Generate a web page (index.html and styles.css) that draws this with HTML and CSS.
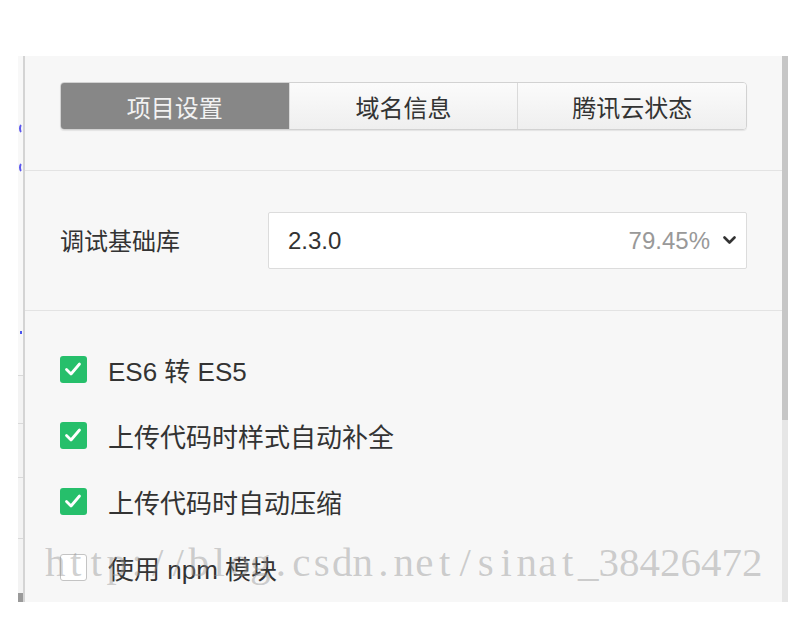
FILE: index.html
```html
<!DOCTYPE html>
<html lang="zh-CN">
<head>
<meta charset="utf-8">
<title>项目设置</title>
<link rel="stylesheet" href="styles.css">
</head>
<body>
<div class="screen">
  <div class="window">
    <div class="sliver">
      <span class="code-mark m1"></span>
      <span class="code-mark m2"></span>
      <span class="code-dot"></span>
      <div class="sl-top"></div>
      <div class="sl-row h48"></div>
      <div class="sl-row h54"></div>
      <div class="sl-row h61"></div>
      <div class="sl-row h55"></div>
      <div class="sl-bottom"></div>
    </div>
    <div class="panel">
      <div class="sec sec-tabs">
        <div class="tabs">
          <div class="tab active">项目设置</div>
          <div class="tab">域名信息</div>
          <div class="tab">腾讯云状态</div>
        </div>
      </div>
      <div class="sec sec-lib">
        <div class="lib-row">
          <div class="lib-label">调试基础库</div>
          <div class="select">
            <span class="sel-value">2.3.0</span>
            <span class="sel-pct">79.45%</span>
            <svg class="chev" width="13" height="9" viewBox="0 0 13 9"><polyline points="1.5,1.5 6.5,6.5 11.5,1.5" fill="none" stroke="#333" stroke-width="2.6" stroke-linecap="round" stroke-linejoin="round"/></svg>
          </div>
        </div>
      </div>
      <div class="sec sec-opts">
        <div class="opt">
          <span class="cb on"><svg width="26" height="26" viewBox="0 0 26 26"><polyline points="6.5,13.5 11,18 19.5,8" fill="none" stroke="#fff" stroke-width="2.8" stroke-linecap="round" stroke-linejoin="round"/></svg></span>
          <span class="opt-text">ES6 转 ES5</span>
        </div>
        <div class="opt">
          <span class="cb on"><svg width="26" height="26" viewBox="0 0 26 26"><polyline points="6.5,13.5 11,18 19.5,8" fill="none" stroke="#fff" stroke-width="2.8" stroke-linecap="round" stroke-linejoin="round"/></svg></span>
          <span class="opt-text">上传代码时样式自动补全</span>
        </div>
        <div class="opt">
          <span class="cb on"><svg width="26" height="26" viewBox="0 0 26 26"><polyline points="6.5,13.5 11,18 19.5,8" fill="none" stroke="#fff" stroke-width="2.8" stroke-linecap="round" stroke-linejoin="round"/></svg></span>
          <span class="opt-text">上传代码时自动压缩</span>
        </div>
        <div class="opt">
          <span class="cb off"></span>
          <span class="opt-text">使用 npm 模块</span>
        </div>
      </div>
    </div>
    <div class="scrollbar"><div class="thumb"></div></div>
  </div>
  <div class="watermark"><span>h</span><span>t</span><span>t</span><span>p</span><span>:</span><span>/</span><span>/</span><span>b</span><span>l</span><span>o</span><span>g</span><span>.</span><span>c</span><span>s</span><span>d</span><span>n</span><span>.</span><span>n</span><span>e</span><span>t</span><span>/</span><span>s</span><span>i</span><span>n</span><span>a</span><span>t</span><span>_</span><span>3</span><span>8</span><span>4</span><span>2</span><span>6</span><span>4</span><span>7</span><span>2</span></div>
</div>
</body>
</html>
```

FILE: styles.css
```css
* { box-sizing: border-box; }

html, body {
  margin: 0;
  padding: 0;
  background: #ffffff;
}

body {
  font-family: "Liberation Sans", "Noto Sans CJK SC", sans-serif;
  color: #333333;
}

.screen {
  position: relative;
  width: 810px;
  height: 624px;
  padding: 56px 0 0 18px;
  overflow: hidden;
}

.window {
  display: flex;
  height: 546px;
}

/* sliver of the window behind */
.sliver {
  position: relative;
  width: 7px;
  display: flex;
  flex-direction: column;
  background: #f3f3f3;
  border-right: 2px solid #d4d4d4;
  overflow: hidden;
}
.sl-top { height: 319px; background: #f8f8f8; }
.sl-row { border-top: 1px solid #d9d9d9; }
.h48 { height: 48px; }
.h54 { height: 54px; }
.h61 { height: 61px; }
.h55 { height: 55px; }
.sl-bottom { flex: 1; background: #9a9a9a; }

.code-mark {
  position: absolute;
  left: 1px;
  width: 9px;
  height: 11px;
  border: 2px solid transparent;
  border-left-color: #5a55ee;
  border-radius: 50%;
}
.m1 { top: 67px; }
.m2 { top: 106px; }
.code-dot {
  position: absolute;
  left: 2px;
  top: 275px;
  width: 2px;
  height: 3px;
  background: #4a55f0;
}

/* main panel */
.panel {
  width: 757px;
  background: #f7f7f7;
  overflow: hidden;
}

.sec { border-bottom: 1px solid #e3e3e3; }

.sec-tabs { padding: 26px 35px 40px 35px; }

.tabs {
  display: flex;
  height: 48px;
  border: 1px solid #d2d2d2;
  border-radius: 4px;
  overflow: hidden;
  box-shadow: 0 1px 1px rgba(0, 0, 0, 0.08);
}

.tab {
  flex: 1;
  display: flex;
  align-items: center;
  justify-content: center;
  font-size: 24px;
  color: #333333;
  background: linear-gradient(#fbfbfb, #efefef);
  border-left: 1px solid #dadada;
}
.tab:first-child { border-left: none; }
.tab.active {
  background: #878787;
  color: #f2f2f2;
}

.sec-lib { padding: 41px 35px 41px 35px; }

.lib-row {
  display: flex;
  align-items: center;
}

.lib-label {
  width: 208px;
  font-size: 24px;
  color: #333333;
  padding-bottom: 3px;
}

.select {
  flex: 1;
  height: 57px;
  display: flex;
  align-items: center;
  padding: 0 10px 0 19px;
  background: #ffffff;
  border: 1px solid #dcdcdc;
  border-radius: 2px;
}

.sel-value {
  flex: 1;
  font-size: 24px;
  color: #333333;
}

.sel-pct {
  font-size: 24px;
  color: #999999;
  margin-right: 13px;
}

.chev { display: block; }

.sec-opts {
  padding: 25px 35px 0 35px;
  border-bottom: none;
}

.opt {
  height: 66px;
  display: flex;
  align-items: center;
}

.cb {
  width: 27px;
  height: 27px;
  border-radius: 3px;
  margin-right: 21px;
  flex: none;
}
.cb svg { display: block; }
.cb.on { background: #26bf6b; }
.cb.off {
  background: #ffffff;
  border: 1px solid #c4c4c4;
}

.opt-text {
  font-size: 26px;
  color: #333333;
}

.scrollbar {
  width: 6px;
  background: #e6e6e6;
}
.thumb {
  height: 364px;
  background: #c6c6c6;
}

/* watermark overlay */
.watermark {
  position: absolute;
  left: 45px;
  top: 540px;
  display: flex;
  font-family: "Liberation Serif", serif;
  font-size: 41px;
  line-height: 44px;
  color: rgba(150, 150, 150, 0.45);
  white-space: nowrap;
}
.watermark span {
  width: 20.5px;
  text-align: center;
}
```
